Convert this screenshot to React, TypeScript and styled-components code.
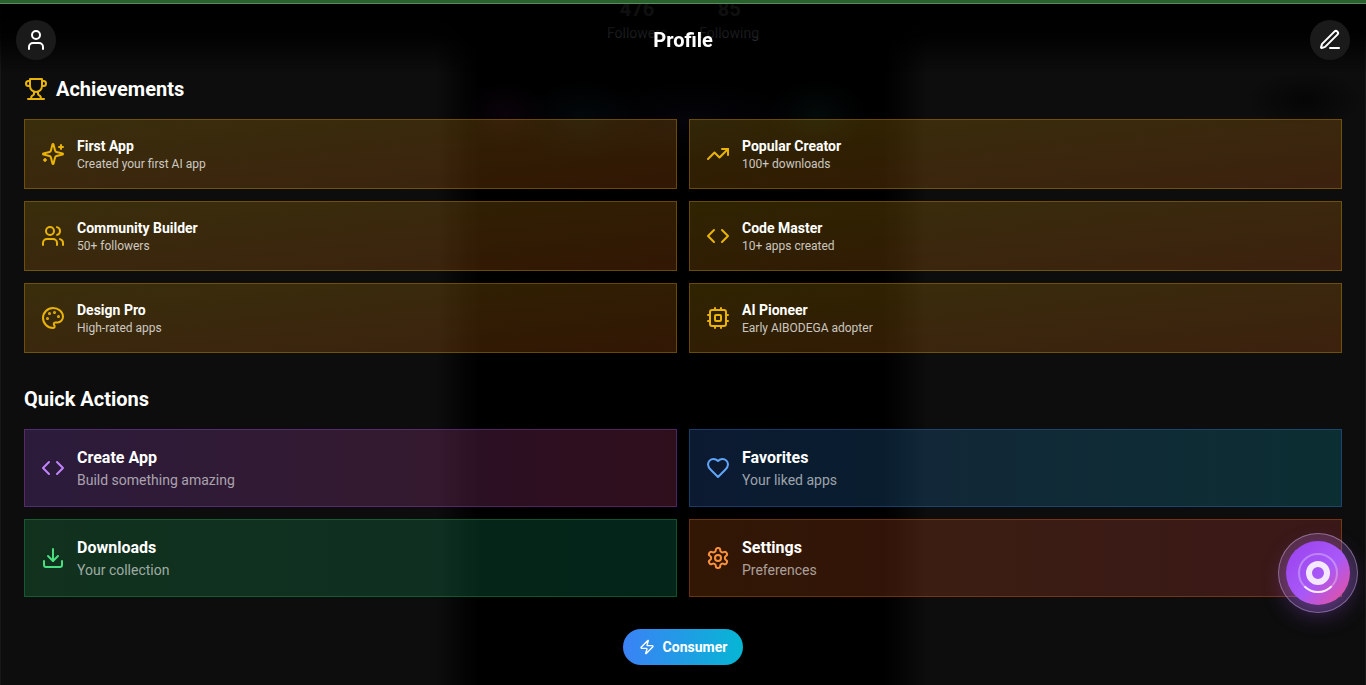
import React from "react";
import styled, { createGlobalStyle } from "styled-components";
import { Code, Download, TrendingUp, User, Users, Zap } from "lucide-react";

const GlobalStyle = createGlobalStyle`
  *, *::before, *::after { box-sizing: border-box; }
  body {
    margin: 0;
    background: #0d0d0d;
    color: #fff;
    font-family: Roboto, "Liberation Sans", sans-serif;
  }
  h1, h2, h3, p, dl, dd, dt { margin: 0; }
  button { font: inherit; color: inherit; cursor: pointer; border: 0; }
`;

const Screen = styled.div`
  position: relative;
  min-height: 100vh;
  border: 1px solid #181818;
  border-top: 0;
  background:
    radial-gradient(closest-side, rgba(0, 0, 0, 0.6), transparent) right 0 top 70px / 120px 60px no-repeat,
    radial-gradient(closest-side, #0a030a, transparent) calc(50% - 177px) 80px / 90px 70px no-repeat,
    radial-gradient(closest-side, #03080b, transparent) calc(50% - 100px) 80px / 120px 80px no-repeat,
    radial-gradient(closest-side, #04040a, transparent) calc(50% + 10px) 80px / 220px 80px no-repeat,
    radial-gradient(closest-side, #030a09, transparent) calc(50% + 134px) 80px / 100px 70px no-repeat,
    linear-gradient(
      90deg,
      #0d0d0d calc(50% - 247px),
      #060606 calc(50% - 225px),
      #000 calc(50% - 203px),
      #000 calc(50% + 200px),
      #060606 calc(50% + 222px),
      #0d0d0d calc(50% + 245px)
    );
`;

const LoadingBar = styled.div`
  position: fixed;
  inset: 0 0 auto 0;
  z-index: 3;
  height: 4px;
  background: #2a622d;
  border-bottom: 1px solid #5b8a5e;
`;

const Header = styled.header`
  position: fixed;
  inset: 0 0 auto 0;
  z-index: 2;
  display: flex;
  align-items: center;
  justify-content: space-between;
  padding: 20px 16px;
  background: linear-gradient(180deg, rgba(0, 0, 0, 0.94) 20%, rgba(0, 0, 0, 0.84) 45%, transparent 90%);
`;

const Title = styled.h1`
  font-size: 20px;
  line-height: 28px;
  font-weight: 700;
`;

const RoundButton = styled.button`
  display: grid;
  place-items: center;
  width: 40px;
  height: 40px;
  padding: 0;
  border-radius: 50%;
  background: #1a1a1a;
`;

const Content = styled.main`
  display: flex;
  flex-direction: column;
  gap: 32px;
  padding: 0 23px 20px;
`;

const Stats = styled.dl`
  display: flex;
  justify-content: center;
  gap: 32px;
`;

const Stat = styled.div`
  display: flex;
  flex-direction: column-reverse;
  gap: 5px;
  text-align: center;
`;

const StatLabel = styled.dt`
  color: #9ca3af;
  font-size: 14px;
  line-height: 20px;
`;

const StatValue = styled.dd`
  font-size: 20px;
  line-height: 18px;
  font-weight: 700;
`;

const Section = styled.section`
  display: flex;
  flex-direction: column;
  gap: 16px;
`;

const SectionTitle = styled.h2`
  display: flex;
  align-items: center;
  gap: 8px;
  font-size: 20px;
  line-height: 28px;
  font-weight: 700;
  svg { color: #eab308; }
`;

const CardGrid = styled.div`
  display: grid;
  grid-template-columns: repeat(2, minmax(0, 1fr));
  gap: 12px;
`;

const AchievementCard = styled.article`
  display: flex;
  align-items: center;
  gap: 12px;
  padding: 16px;
  border: 1px solid rgba(234, 179, 8, 0.3);
  background: linear-gradient(to bottom right, rgba(234, 179, 8, 0.2), rgba(249, 115, 22, 0.2));
  svg { flex: none; color: #eab308; }
`;

const AchievementName = styled.h3`
  font-size: 14px;
  line-height: 20px;
  font-weight: 700;
`;

const AchievementNote = styled.p`
  color: rgba(255, 255, 255, 0.75);
  font-size: 12px;
  line-height: 16px;
`;

const ActionCard = styled.button<{ $from: string; $to: string; $edge: string; $icon: string }>`
  display: flex;
  align-items: center;
  gap: 12px;
  padding: 16px;
  border: 1px solid ${(p) => p.$edge};
  background: linear-gradient(90deg, ${(p) => p.$from}, ${(p) => p.$to});
  text-align: left;
  svg { flex: none; color: ${(p) => p.$icon}; }
`;

const ActionText = styled.span`
  display: flex;
  flex-direction: column;
`;

const ActionName = styled.span`
  font-size: 16px;
  line-height: 24px;
  font-weight: 700;
`;

const ActionNote = styled.span`
  color: rgba(255, 255, 255, 0.6);
  font-size: 14px;
  line-height: 20px;
`;

const RoleButton = styled.button`
  display: flex;
  align-items: center;
  align-self: center;
  gap: 8px;
  padding: 8px 16px;
  border-radius: 18px;
  background: linear-gradient(90deg, #3b82f6, #06b6d4);
  font-size: 14px;
  line-height: 20px;
  font-weight: 700;
`;

const Assistant = styled.button`
  position: fixed;
  right: 8px;
  bottom: 72px;
  z-index: 2;
  display: grid;
  place-items: center;
  width: 80px;
  height: 80px;
  padding: 0;
  border: 1px solid rgba(233, 213, 255, 0.4);
  border-radius: 50%;
  background: rgba(192, 132, 252, 0.2);
`;

const AssistantFace = styled.span`
  display: grid;
  place-items: center;
  width: 64px;
  height: 64px;
  border-radius: 50%;
  background: linear-gradient(135deg, #9b45f0 10%, #a958f8 55%, #d653b4 85%);
  box-shadow: 0 8px 24px rgba(168, 85, 247, 0.4);
`;

const strokeProps = {
  width: 24,
  height: 24,
  viewBox: "0 0 24 24",
  fill: "none",
  stroke: "currentColor",
  strokeWidth: 2,
  strokeLinecap: "round",
  strokeLinejoin: "round",
  "aria-hidden": true,
} as const;

const TrophyIcon = () => (
  <svg {...strokeProps}>
    <path d="M6 9H4.5a2.5 2.5 0 0 1 0-5H6" />
    <path d="M18 9h1.5a2.5 2.5 0 0 0 0-5H18" />
    <path d="M4 22h16" />
    <path d="M10 14.66V17c0 .55-.47.98-.97 1.21C7.85 18.75 7 20.24 7 22" />
    <path d="M14 14.66V17c0 .55.47.98.97 1.21C16.15 18.75 17 20.24 17 22" />
    <path d="M18 2H6v7a6 6 0 0 0 12 0V2Z" />
  </svg>
);

const SparklesIcon = () => (
  <svg {...strokeProps}>
    <path d="M9.937 15.5A2 2 0 0 0 8.5 14.063l-6.135-1.582a.5.5 0 0 1 0-.962L8.5 9.936A2 2 0 0 0 9.937 8.5l1.582-6.135a.5.5 0 0 1 .963 0L14.063 8.5A2 2 0 0 0 15.5 9.937l6.135 1.581a.5.5 0 0 1 0 .964L15.5 14.063a2 2 0 0 0-1.437 1.437l-1.582 6.135a.5.5 0 0 1-.963 0z" />
    <path d="M20 3v4M22 5h-4M4 17v2M5 18H3" />
  </svg>
);

const EditIcon = () => (
  <svg {...strokeProps}>
    <path d="M12 20h9" />
    <path d="M16.376 3.622a1 1 0 0 1 3.002 3.002L7.368 18.635a2 2 0 0 1-.855.506l-2.872.838a.5.5 0 0 1-.62-.62l.838-2.872a2 2 0 0 1 .506-.854z" />
  </svg>
);

const PaletteIcon = () => (
  <svg {...strokeProps}>
    <circle cx="13.5" cy="6.5" r=".5" fill="currentColor" />
    <circle cx="17.5" cy="10.5" r=".5" fill="currentColor" />
    <circle cx="8.5" cy="7.5" r=".5" fill="currentColor" />
    <circle cx="6.5" cy="12.5" r=".5" fill="currentColor" />
    <path d="M12 2C6.5 2 2 6.5 2 12s4.5 10 10 10c.926 0 1.648-.746 1.648-1.688 0-.437-.18-.835-.437-1.125-.29-.289-.438-.652-.438-1.125a1.64 1.64 0 0 1 1.668-1.668h1.996c3.051 0 5.555-2.503 5.555-5.554C21.965 6.012 17.461 2 12 2z" />
  </svg>
);

const CpuIcon = () => (
  <svg {...strokeProps}>
    <rect x="4" y="4" width="16" height="16" rx="2" />
    <rect x="9" y="9" width="6" height="6" rx="1" />
    <path d="M15 2v2M15 20v2M2 15h2M2 9h2M20 15h2M20 9h2M9 2v2M9 20v2" />
  </svg>
);

const HeartIcon = () => (
  <svg {...strokeProps}>
    <path d="M19 14c1.49-1.46 3-3.21 3-5.5A5.5 5.5 0 0 0 16.5 3c-1.76 0-3 .5-4.5 2-1.5-1.5-2.74-2-4.5-2A5.5 5.5 0 0 0 2 8.5c0 2.3 1.5 4.05 3 5.5l7 7Z" />
  </svg>
);

const SettingsIcon = () => (
  <svg {...strokeProps}>
    <path d="M12.22 2h-.44a2 2 0 0 0-2 2v.18a2 2 0 0 1-1 1.73l-.43.25a2 2 0 0 1-2 0l-.15-.08a2 2 0 0 0-2.73.73l-.22.38a2 2 0 0 0 .73 2.73l.15.1a2 2 0 0 1 1 1.72v.51a2 2 0 0 1-1 1.74l-.15.09a2 2 0 0 0-.73 2.73l.22.38a2 2 0 0 0 2.73.73l.15-.08a2 2 0 0 1 2 0l.43.25a2 2 0 0 1 1 1.73V20a2 2 0 0 0 2 2h.44a2 2 0 0 0 2-2v-.18a2 2 0 0 1 1-1.73l.43-.25a2 2 0 0 1 2 0l.15.08a2 2 0 0 0 2.73-.73l.22-.39a2 2 0 0 0-.73-2.73l-.15-.08a2 2 0 0 1-1-1.74v-.5a2 2 0 0 1 1-1.74l.15-.09a2 2 0 0 0 .73-2.73l-.22-.38a2 2 0 0 0-2.73-.73l-.15.08a2 2 0 0 1-2 0l-.43-.25a2 2 0 0 1-1-1.73V4a2 2 0 0 0-2-2z" />
    <circle cx="12" cy="12" r="3" />
  </svg>
);

const AssistantMark = () => (
  <svg width="40" height="40" viewBox="0 0 40 40" fill="none" aria-hidden="true">
    <circle cx="20" cy="20" r="19" stroke="#fff" strokeOpacity="0.3" strokeWidth="2" />
    <circle cx="20" cy="20" r="9" stroke="#f3e8ff" strokeWidth="6" />
    <path d="M6.5 33.4a19 19 0 0 0 27 0" stroke="#f8efff" strokeWidth="2" />
  </svg>
);

const achievements = [
  { name: "First App", note: "Created your first AI app", Icon: SparklesIcon },
  { name: "Popular Creator", note: "100+ downloads", Icon: TrendingUp },
  { name: "Community Builder", note: "50+ followers", Icon: Users },
  { name: "Code Master", note: "10+ apps created", Icon: Code },
  { name: "Design Pro", note: "High-rated apps", Icon: PaletteIcon },
  { name: "AI Pioneer", note: "Early AIBODEGA adopter", Icon: CpuIcon },
];

const actions = [
  {
    name: "Create App", note: "Build something amazing", Icon: Code,
    from: "rgba(168, 85, 247, 0.2)", to: "rgba(236, 72, 140, 0.2)", edge: "rgba(168, 85, 247, 0.3)", icon: "#c084fc",
  },
  {
    name: "Favorites", note: "Your liked apps", Icon: HeartIcon,
    from: "rgba(59, 130, 246, 0.2)", to: "rgba(6, 182, 200, 0.2)", edge: "rgba(59, 130, 246, 0.3)", icon: "#60a5fa",
  },
  {
    name: "Downloads", note: "Your collection", Icon: Download,
    from: "rgba(34, 197, 94, 0.2)", to: "rgba(16, 185, 129, 0.2)", edge: "rgba(34, 197, 94, 0.3)", icon: "#4ade80",
  },
  {
    name: "Settings", note: "Preferences", Icon: SettingsIcon,
    from: "rgba(249, 115, 22, 0.2)", to: "rgba(239, 68, 68, 0.2)", edge: "rgba(249, 115, 22, 0.3)", icon: "#fb923c",
  },
];

export default function App() {
  return (
    <Screen>
      <GlobalStyle />
      <LoadingBar />
      <Header>
        <RoundButton aria-label="Account"><User size={24} /></RoundButton>
        <Title>Profile</Title>
        <RoundButton aria-label="Edit profile"><EditIcon /></RoundButton>
      </Header>
      <Content>
        <Stats>
          <Stat><StatLabel>Followers</StatLabel><StatValue>476</StatValue></Stat>
          <Stat><StatLabel>Following</StatLabel><StatValue>85</StatValue></Stat>
        </Stats>
        <Section>
          <SectionTitle><TrophyIcon />Achievements</SectionTitle>
          <CardGrid>
            {achievements.map(({ name, note, Icon }) => (
              <AchievementCard key={name}>
                <Icon />
                <div>
                  <AchievementName>{name}</AchievementName>
                  <AchievementNote>{note}</AchievementNote>
                </div>
              </AchievementCard>
            ))}
          </CardGrid>
        </Section>
        <Section>
          <SectionTitle>Quick Actions</SectionTitle>
          <CardGrid>
            {actions.map(({ name, note, Icon, from, to, edge, icon }) => (
              <ActionCard key={name} $from={from} $to={to} $edge={edge} $icon={icon}>
                <Icon />
                <ActionText>
                  <ActionName>{name}</ActionName>
                  <ActionNote>{note}</ActionNote>
                </ActionText>
              </ActionCard>
            ))}
          </CardGrid>
        </Section>
        <RoleButton><Zap size={16} />Consumer</RoleButton>
      </Content>
      <Assistant aria-label="Open assistant">
        <AssistantFace><AssistantMark /></AssistantFace>
      </Assistant>
    </Screen>
  );
}
